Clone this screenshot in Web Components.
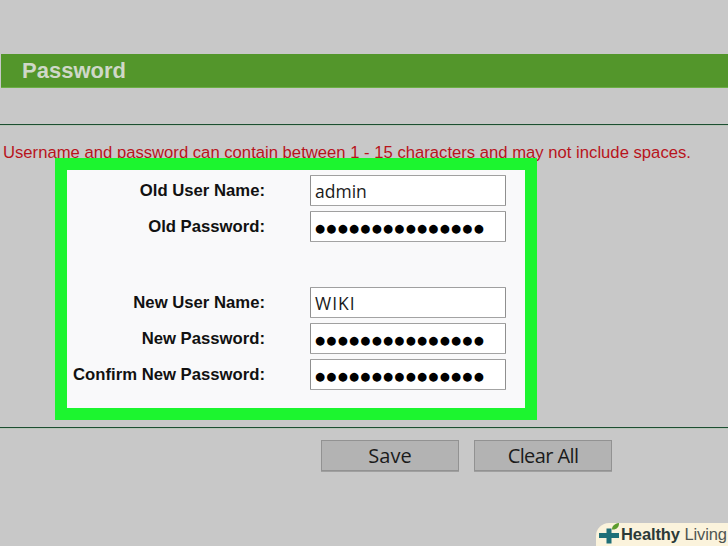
<!DOCTYPE html>
<html>
<head>
<meta charset="utf-8">
<style>
  html, body { margin: 0; height: 100%; }
  body { background: #c8c8c8; overflow: hidden; font-family: "Liberation Sans", Arial, sans-serif; }
</style>
</head>
<body>
<template id="tpl-form-row">
  <style>
    :host { display: grid; grid-template-columns: 192px 196px; column-gap: 45px; align-items: center; height: 31px; }
    .label { font: bold 16.7px/31px "Liberation Sans", Arial, sans-serif; color: #111; text-align: right; white-space: nowrap; }
    .box { box-sizing: border-box; height: 31px; background: #fff; border: 1px solid #8f8f8f; border-bottom-color: #a3a3a3; border-top-color: #a0a0a0; padding-left: 4px; border-radius: 1px;
           font: 17.5px/31px "Open Sans", "Noto Sans", sans-serif; color: #1a1a1a; white-space: nowrap; overflow: hidden; }
    .box.secret { font: 11.5px/33px "DejaVu Sans", sans-serif; letter-spacing: 1.3px; color: #000; }
  </style>
  <div class="label"><slot name="label"></slot></div>
  <div class="box"><slot></slot></div>
</template>

<template id="tpl-page-bar">
  <style>
    :host { display: block; height: 33px; margin-left: 1px; background: #53962b; border-bottom: 1px solid #6cae45; }
    div { font: bold 22px/33px "Liberation Sans", Arial, sans-serif; color: #cfd8c8; padding-left: 21px; }
  </style>
  <div><slot></slot></div>
</template>

<template id="tpl-page-rule">
  <style>
    :host { display: block; height: 1px; background: #1c4f31; box-shadow: 0 1px 0 #b9c4b9; }
  </style>
</template>

<template id="tpl-gray-button">
  <style>
    :host { display: block; box-sizing: border-box; width: 138px; height: 31px; background: #b3b3b3; border: 1px solid #929292; box-shadow: 0 1px 0 #a0a0a0;
            font: 20px/29px "Open Sans", "Noto Sans", sans-serif; color: #1b1b1b; text-align: center; }
  </style>
  <slot></slot>
</template>

<template id="tpl-highlight-box">
  <style>
    :host { display: block; box-sizing: border-box; width: 482px; height: 262px; border: 12px solid #1cf52f; background: #f9f9fa; padding: 5px 0 0 6px; position: relative; }
    .stack { display: flex; flex-direction: column; gap: 5px; }
    ::slotted(.gap) { height: 35px; }
  </style>
  <div class="stack"><slot></slot></div>
</template>

<template id="tpl-brand-badge">
  <style>
    :host { position: absolute; right: 0; bottom: 0; width: 132px; height: 23px; background: #fbf3dc; border-top-left-radius: 13px; display: flex; align-items: center; padding-left: 3px; box-sizing: border-box; }
    svg { flex: none; margin-top: -2px; }
    span { font: 16.5px/23px "Liberation Sans", Arial, sans-serif; color: #4f5552; white-space: nowrap; margin-left: 1px; letter-spacing: -0.1px; }
    b { color: #2b3a38; }
  </style>
  <svg width="21" height="21" viewBox="0 0 21 21">
    <path d="M7.500 5.500h5v4.500h7.500v5h-7.500v5.500h-5V15H0v-5h7.500z" fill="#1f6f78"/>
    <path d="M13 6.500C13 3 15.500.8 20 0c.2 3.800-2 6.800-7 6.500z" fill="#5c9c2e"/>
  </svg>
  <span><b>Healthy</b> Living</span>
</template>

<page-bar style="margin-top:54px">Password</page-bar>
<page-rule style="margin-top:36px"></page-rule>
<div style="margin:18px 0 0 3px;font-size:16.66px;line-height:20px;color:#b8141c;white-space:nowrap">Username and password can contain between 1 - 15 characters and may not include spaces.</div>

<highlight-box style="margin:-5px 0 0 55px">
  <form-row><span slot="label">Old User Name:</span>admin</form-row>
  <form-row secret><span slot="label">Old Password:</span>●●●●●●●●●●●●●●●</form-row>
  <div class="gap"></div>
  <form-row><span slot="label">New User Name:</span><span style="letter-spacing:1px">WIKI</span></form-row>
  <form-row secret><span slot="label">New Password:</span>●●●●●●●●●●●●●●●</form-row>
  <form-row secret><span slot="label">Confirm New Password:</span>●●●●●●●●●●●●●●●</form-row>
</highlight-box>

<page-rule style="margin-top:7px"></page-rule>
<div style="display:flex;gap:15px;margin:12px 0 0 321px">
  <gray-button>Save</gray-button>
  <gray-button style="letter-spacing:-.6px">Clear All</gray-button>
</div>
<brand-badge></brand-badge>

<script>
  class TemplateElement extends HTMLElement{
    constructor(){
      super()
      const el = document.querySelector(this.constructor.tpl).content.cloneNode(true)
      this.attachShadow({mode:'open'}).appendChild(el)
    }
  }
  class PageBar extends TemplateElement{ static tpl = '#tpl-page-bar' }
  class PageRule extends TemplateElement{ static tpl = '#tpl-page-rule' }
  class GrayButton extends TemplateElement{ static tpl = '#tpl-gray-button' }
  class HighlightBox extends TemplateElement{ static tpl = '#tpl-highlight-box' }
  class BrandBadge extends TemplateElement{ static tpl = '#tpl-brand-badge' }
  class FormRow extends TemplateElement{
    static tpl = '#tpl-form-row'
    connectedCallback(){
      if (this.hasAttribute('secret'))
        this.shadowRoot.querySelector('.box').classList.add('secret')
    }
  }
  customElements.define('page-bar', PageBar)
  customElements.define('page-rule', PageRule)
  customElements.define('gray-button', GrayButton)
  customElements.define('highlight-box', HighlightBox)
  customElements.define('brand-badge', BrandBadge)
  customElements.define('form-row', FormRow)
</script>
</body>
</html>
